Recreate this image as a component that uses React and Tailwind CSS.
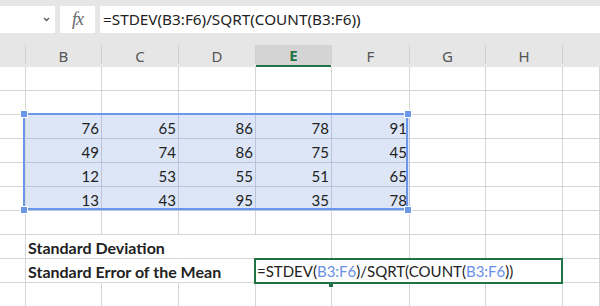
import React from "react";

const widths = "grid-cols-[26px_76px_77px_77px_76px_78px_76px_77px_37px]";
const letters = ["", "B", "C", "D", "E", "F", "G", "H", ""];

const data = {
    3: [76, 65, 86, 78, 91],
    4: [49, 74, 86, 75, 45],
    5: [12, 53, 55, 51, 65],
    6: [13, 43, 95, 35, 78],
};

const labels = {
    8: "Standard Deviation",
    9: "Standard Error of the Mean",
};

function Ref({ children }) {
    return <span className="text-[#6a8fe6]">{children}</span>;
}

function HeaderCell({ letter, index }) {
    const active = letter === "E";
    return (
        <div className="relative h-[22px] flex">
            <div
                className={
                    active
                        ? "flex-1 flex items-center justify-center bg-[#d4d4d4] border-b-2 border-[#217346] text-[#217346] font-bold"
                        : "flex-1 flex items-center justify-center text-[#555]"
                }
            >
                {letter}
            </div>
            {index < 8 && <div className="w-px h-[19px] bg-[#cfcfcf]"></div>}
        </div>
    );
}

function Cell({ row, col }) {
    const inSel = row >= 3 && row <= 6 && col >= 1 && col <= 5;
    const overflowRow = row === 8 || row === 9;
    const hideRight = overflowRow && col >= 1 && col <= 3;

    let cls = "h-[24px] border-r border-b flex items-end leading-[20px]";
    if (inSel) cls += " bg-[#dde6f7] border-b-[#b9c3da] border-r-[#b9c3da]";
    else cls += " border-b-[#d6d6d6]";
    if (!inSel) cls += hideRight ? " border-r-transparent" : " border-r-[#d6d6d6]";

    if (inSel) {
        return (
            <div className={cls + " justify-end pr-[2px]"}>
                {data[row][col - 1]}
            </div>
        );
    }
    if (col === 1 && labels[row]) {
        return (
            <div className={cls + " pl-[2px] relative z-10"}>
                <span className="whitespace-nowrap font-bold text-[16px]">{labels[row]}</span>
            </div>
        );
    }
    return <div className={cls}></div>;
}

const handles = [
    "left-[21px] top-[111px]",
    "left-[405px] top-[111px]",
    "left-[21px] top-[207px]",
    "left-[405px] top-[207px]",
];

export default function App() {
    const rows = [1, 2, 3, 4, 5, 6, 7, 8, 9, 10];

    return (
        <div className="relative w-[600px] h-[306px] overflow-hidden bg-white text-[#222] font-['Lato',sans-serif] text-[15px]">
            {/* formula bar */}
            <div className="h-[33px] bg-[#e6e6e6] pt-[6px] flex gap-[5px]">
                <div className="w-[55px] h-[27px] bg-white flex items-center justify-end pr-[5px]">
                    <svg width="7" height="5" viewBox="0 0 7 5">
                        <path d="M1 1 L3.5 3.5 L6 1" fill="none" stroke="#555" strokeWidth="1.3" />
                    </svg>
                </div>
                <div className="w-[35px] h-[27px] bg-white flex items-center justify-center">
                    <span className="font-['Liberation_Serif',serif] italic text-[18px] text-[#666] tracking-[-1px]">
                        fx
                    </span>
                </div>
                <div className="flex-1 h-[27px] bg-white flex items-center pl-[3px] font-['Noto_Sans',sans-serif] text-[15.3px] text-[#222]">
                    =STDEV(B3:F6)/SQRT(COUNT(B3:F6))
                </div>
            </div>

            {/* column headers */}
            <div className={"h-[34px] bg-[#e6e6e6] grid items-end font-['Noto_Sans',sans-serif] text-[15px] " + widths}>
                {letters.map((l, i) => (
                    <HeaderCell key={i} letter={l} index={i} />
                ))}
            </div>

            {/* grid */}
            {rows.map((r) => (
                <div key={r} className={"grid " + widths}>
                    {letters.map((_, c) => (
                        <Cell key={c} row={r} col={c} />
                    ))}
                </div>
            ))}

            {/* selection */}
            <div className="absolute left-[23px] top-[113px] w-[385px] h-[97px] border-2 border-[#6b97ea]"></div>
            {handles.map((h) => (
                <div key={h} className={"absolute w-[6px] h-[6px] bg-[#6b97ea] outline outline-1 outline-white " + h}></div>
            ))}

            {/* active cell in edit mode */}
            <div className="absolute left-[254px] top-[258px] w-[309px] h-[26px] border-2 border-[#217346] bg-white pl-[1px] pt-[1px] leading-[20px] whitespace-nowrap">
                =STDEV(<Ref>B3:F6</Ref>)/SQRT(COUNT(<Ref>B3:F6</Ref>))
            </div>
            <div className="absolute left-[329px] top-[284px] w-[4px] h-[3px] bg-[#217346]"></div>
        </div>
    );
}
